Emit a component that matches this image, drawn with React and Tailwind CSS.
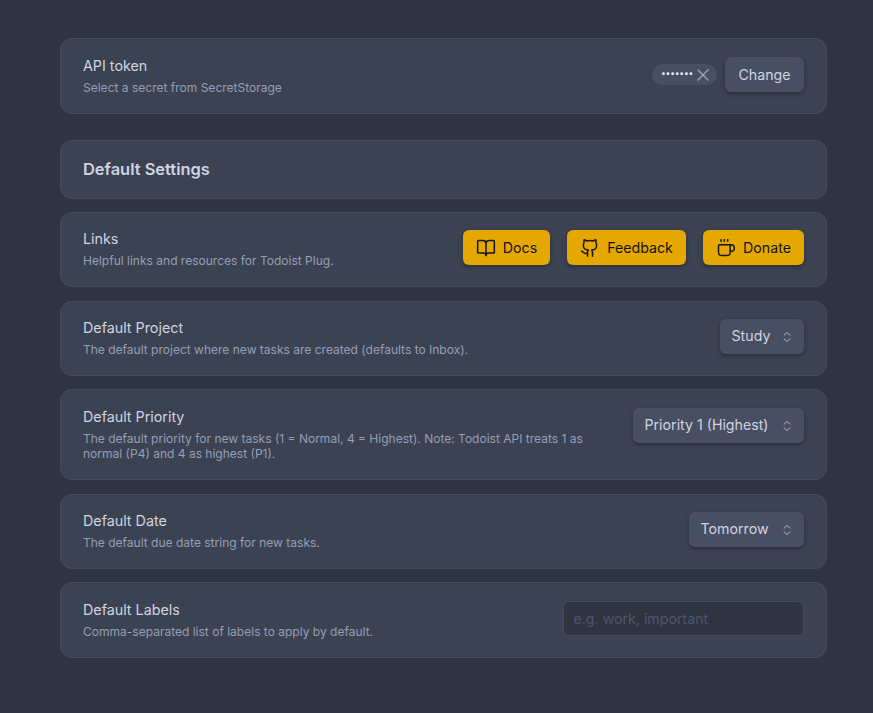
import React from "react";
import { BookOpen, Github, Coffee, X, ChevronsUpDown } from "lucide-react";

function Row({ title, desc, children, className = "pt-[14.5px] pb-[18px]", ctl = "mt-[2.5px]" }) {
  return (
    <div className={`flex items-start justify-between rounded-xl border border-[#444c5e] bg-[#3b4252] px-[22px] ${className}`}>
      <div className="flex min-w-0 flex-1 flex-col gap-[3px] pr-[32px]">
        <div className="text-[14.3px] leading-[22px] text-[#ced4e0]">{title}</div>
        <div className="text-[12.03px] leading-[15.5px] text-[#939fb6]">{desc}</div>
      </div>
      <div className={`flex shrink-0 items-center ${ctl}`}>{children}</div>
    </div>
  );
}

function YellowBtn({ icon, label, w }) {
  return (
    <button className={`flex h-[35px] items-center justify-center gap-[7px] rounded-md bg-[#e5a800] text-[14.2px] text-[#141414] shadow-[0_2px_4px_rgba(0,0,0,0.3)] ${w}`}>
      {icon}
      <span>{label}</span>
    </button>
  );
}

function Select({ label, w }) {
  return (
    <div className={`flex h-[35px] items-center justify-between rounded-md bg-[#484f63] pl-[11.5px] pr-[10px] text-[14.2px] text-[#ced4e0] shadow-[0_2px_4px_rgba(0,0,0,0.3)] ${w}`}>
      <span className="pb-[2px]">{label}</span>
      <ChevronsUpDown size={14} strokeWidth={1.6} className="text-[#bcc3d0]" />
    </div>
  );
}

export default function App() {
  return (
    <div className="min-h-[713px] bg-[#2f3440] pl-[60px] pr-[46px] pb-[55px] pt-[38px] antialiased [font-family:Inter,sans-serif]">
      <Row className="pt-[15.5px] pb-[18px]" title="API token" desc="Select a secret from SecretStorage">
        <div className="mr-[8px] flex h-[21px] w-[65px] items-center rounded-full bg-[#484f63] pl-[9px]">
          <span className="relative top-[-1px] w-[29px] shrink-0 text-[8.5px] leading-none tracking-[-0.2px] text-[#e5e9f0]">•••••••</span>
          <X size={20} strokeWidth={1.7} className="ml-[3px] shrink-0 text-[#9aa3b5]" />
        </div>
        <button className="flex h-[35px] w-[79px] items-center justify-center rounded-md bg-[#484f63] text-[14.2px] text-[#ced4e0] shadow-[0_2px_4px_rgba(0,0,0,0.3)]">Change</button>
      </Row>

      <div className="mt-[26px] flex h-[59px] items-center rounded-xl border border-[#444c5e] bg-[#3b4252] px-[22px]">
        <span className="text-[16.45px] font-semibold text-[#ced4e0]">Default Settings</span>
      </div>

      <Row className="mt-[13px] pt-[14.5px] pb-[18px]" title="Links" desc="Helpful links and resources for Todoist Plug.">
        <div className="flex items-center gap-[17px]">
          <YellowBtn w="w-[87px]" label="Docs" icon={<BookOpen size={20} strokeWidth={1.8} />} />
          <YellowBtn w="w-[119px]" label="Feedback" icon={<Github size={20} strokeWidth={1.8} />} />
          <YellowBtn w="w-[101px]" label="Donate" icon={<Coffee size={20} strokeWidth={1.8} />} />
        </div>
      </Row>

      <Row className="mt-[14px] pt-[14.5px] pb-[18px]" title="Default Project" desc="The default project where new tasks are created (defaults to Inbox).">
        <Select label="Study" w="w-[84px]" />
      </Row>

      <Row className="mt-[13px] pt-[15.5px] pb-[17.5px]" title="Default Priority" desc="The default priority for new tasks (1 = Normal, 4 = Highest). Note: Todoist API treats 1 as normal (P4) and 4 as highest (P1).">
        <Select label="Priority 1 (Highest)" w="w-[171px]" />
      </Row>

      <Row className="mt-[14px] pt-[14.5px] pb-[18px]" title="Default Date" desc="The default due date string for new tasks.">
        <Select label="Tomorrow" w="w-[115px]" />
      </Row>

      <Row className="mt-[13px] pt-[15.5px] pb-[18px]" title="Default Labels" desc="Comma-separated list of labels to apply by default.">
        <input
          placeholder="e.g. work, important"
          className="h-[35px] w-[241px] rounded-md border border-[#444c5e] bg-[#2f3440] px-[9.5px] text-[14.2px] text-[#d8dee9] outline-none placeholder:text-[#4c566a]"
        />
      </Row>
    </div>
  );
}
